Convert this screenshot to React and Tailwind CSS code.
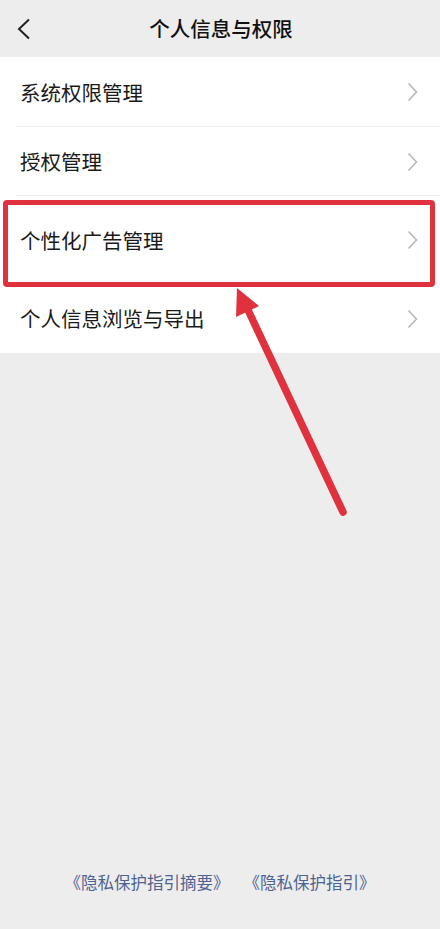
import React from "react";

const rows = [
  { label: "系统权限管理", h: "h-[70px]" },
  { label: "授权管理", h: "h-[69px]" },
  { label: "个性化广告管理", h: "h-[88px]", marked: true },
  { label: "个人信息浏览与导出", h: "h-[69px]" },
];

function Chevron() {
  return (
    <svg width="11" height="20" viewBox="0 0 11 20" className="shrink-0">
      <path d="M1.5 1.5 L9.5 10 L1.5 18.5" fill="none" stroke="#b8b8b8" strokeWidth="1.6" />
    </svg>
  );
}

export default function App() {
  return (
    <div
      className="relative h-[929px] w-[440px] bg-[#ededed] flex flex-col overflow-hidden"
      style={{ fontFamily: '"Noto Sans CJK SC", "Noto Sans", sans-serif' }}
    >
      {/* header */}
      <div className="h-[57px] flex items-center relative">
        <svg width="16" height="22" viewBox="0 0 16 22" className="ml-[16px]">
          <path d="M13 1.5 L3 11 L13 20.5" fill="none" stroke="#222" strokeWidth="2" />
        </svg>
        <div className="absolute inset-0 flex items-center justify-center pl-[2px] text-[20.5px] font-medium text-[#111]">
          个人信息与权限
        </div>
      </div>

      {/* list */}
      <div className="bg-white flex flex-col">
        {rows.map((r, i) => (
          <div key={i} className={"relative flex items-center pl-[20px] pr-[22px] " + r.h}>
            <div className="flex-1 text-[20.5px] text-[#1a1a1a]">{r.label}</div>
            <Chevron />
            {i < rows.length - 1 && (
              <div className="absolute bottom-0 left-[16px] right-0 h-px bg-[#eeeeee]" />
            )}
            {r.marked && (
              <div className="absolute left-[3px] right-[5px] top-[4px] bottom-[-3px] border-[5px] border-[#e0323e] rounded-[4px]" />
            )}
          </div>
        ))}
      </div>

      {/* footer links */}
      <div className="mt-auto mb-[34px] flex justify-center gap-[14px] text-[16.5px] text-[#4f6390]">
        <span>《隐私保护指引摘要》</span>
        <span>《隐私保护指引》</span>
      </div>

      {/* annotation arrow */}
      <svg
        className="absolute inset-0 pointer-events-none"
        width="440"
        height="929"
        viewBox="0 0 440 929"
      >
        <line x1="343" y1="512" x2="248" y2="310" stroke="#e0323e" strokeWidth="7.5" strokeLinecap="round" />
        <polygon points="237,288 259,306 236,317" fill="#e0323e" />
      </svg>
    </div>
  );
}
